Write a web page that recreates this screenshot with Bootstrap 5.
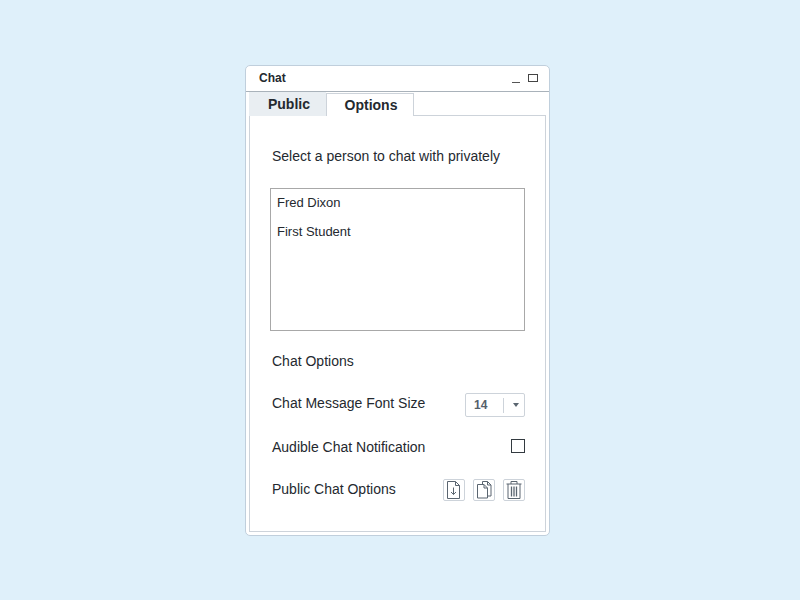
<!DOCTYPE html>
<html lang="en"><head><meta charset="utf-8"><title>Chat</title>
<link href="https://cdn.jsdelivr.net/npm/bootstrap@5.3.0/dist/css/bootstrap.min.css" rel="stylesheet">
<style>
html,body{height:600px;margin:0;background:#dff0fa;}
body{font-family:"Liberation Sans",Arial,sans-serif;color:#24292f;font-size:14px;overflow:hidden;padding:65px 0 0 245px;}
.chat-win{width:305px;height:471px;background:#fff;border:1px solid #c0cfdc;border-radius:5px;}
.chat-head{height:26px;border-bottom:1px solid #a9b2ba;padding:0 11px 0 13px;}
.chat-title{font-size:12px;font-weight:700;line-height:24px;}
.wc-min{width:8px;height:1px;background:#555;margin-top:8px;}
.wc-max{width:10px;height:8px;border:1px solid #444;}
.chat-tabs{padding:0 0 0 3px;height:24px;}
.chat-tab{font-weight:700;font-size:14px;width:77px;padding-left:3px;text-align:center;background:#e9eef2;height:24px;line-height:25px;}
.chat-tab.on{width:88px;padding-left:2px;background:#fff;border:1px solid #cdd3da;border-bottom:0;line-height:23px;margin-top:1px;position:relative;z-index:1;height:23px;}
.chat-panel{margin:-1px 3px 0 3px;height:417px;border:1px solid #cdd3da;padding:0 20px 0 22px;}
.lbl{font-size:14px;line-height:16px;}
.people{height:143px;border:1px solid #a8a8a8;margin:24px 0 0 -2px;padding:6px 6px;}
.people div{line-height:16px;font-size:13px;margin-bottom:13px;}
.size-sel{width:60px;height:24px;border:1px solid #cdd3da;border-radius:2px;font-weight:700;font-size:12px;color:#55606b;padding-left:8px;margin-top:-2px;}
.size-sep{width:1px;height:15px;background:#cdd3da;margin-left:16px;}
.size-arrow{width:0;height:0;border-left:3px solid transparent;border-right:3px solid transparent;border-top:4px solid #5a6570;margin-left:9px;}
.box{width:14px;height:14px;border:1px solid #333a40;}
.icb{width:22px;height:22px;border:1px solid #cdd3da;border-radius:2px;margin-top:-2px;}
.icb svg{display:block;}
.r1{margin-top:22px;}
.r2{margin-top:26px;height:24px;}
.r3{margin-top:20px;height:22px;}
.r4{margin-top:20px;height:22px;}
.top-l{margin-top:32px;}
</style></head>
<body>
<div class="chat-win">
  <div class="chat-head d-flex justify-content-between">
    <div class="chat-title">Chat</div>
    <div class="d-flex align-items-center gap-2" style="height:24px">
      <div class="wc-min"></div><div class="wc-max"></div>
    </div>
  </div>
  <div class="chat-tabs d-flex">
    <div class="chat-tab">Public</div>
    <div class="chat-tab on">Options</div>
  </div>
  <div class="chat-panel">
    <div class="lbl top-l">Select a person to chat with privately</div>
    <div class="people"><div>Fred Dixon</div><div>First Student</div></div>
    <div class="lbl r1">Chat Options</div>
    <div class="r2 d-flex justify-content-between align-items-start">
      <div class="lbl">Chat Message Font Size</div>
      <div class="size-sel d-flex align-items-center"><span>14</span><span class="size-sep"></span><span class="size-arrow"></span></div>
    </div>
    <div class="r3 d-flex justify-content-between align-items-start">
      <div class="lbl">Audible Chat Notification</div>
      <div class="box"></div>
    </div>
    <div class="r4 d-flex justify-content-between align-items-start">
      <div class="lbl">Public Chat Options</div>
      <div class="d-flex" style="gap:8px">
        <div class="icb"><svg width="20" height="20" viewBox="0 0 20 20" fill="none" stroke="#5a6570"><path d="M3.500 1.500h8l4 4v13h-12z"/><path d="M11.500 1.500v4h4"/><path d="M9.500 7.500v7M7 12l2.500 2.500 2.500-2.500"/></svg></div>
        <div class="icb"><svg width="20" height="20" viewBox="0 0 20 20" fill="none" stroke="#5a6570"><path d="M8.500 4v-2.500h5l3.500 3.500v11h-3.500"/><path d="M13.500 1.500v3.500h3.500"/><path d="M3.500 4.500h6.500l3.500 3.500v10h-10z"/><path d="M10 4.500v3.500h3.500"/></svg></div>
        <div class="icb"><svg width="20" height="20" viewBox="0 0 20 20" fill="none" stroke="#5a6570"><path d="M2.500 4h15M7 4v-2.500h6v2.500"/><path d="M4 4v14.500h12v-14.500"/><path d="M7.500 6.500v10M10 6.500v10M12.500 6.500v10" stroke-width="1.300"/></svg></div>
      </div>
    </div>
  </div>
</div>
</body></html>
